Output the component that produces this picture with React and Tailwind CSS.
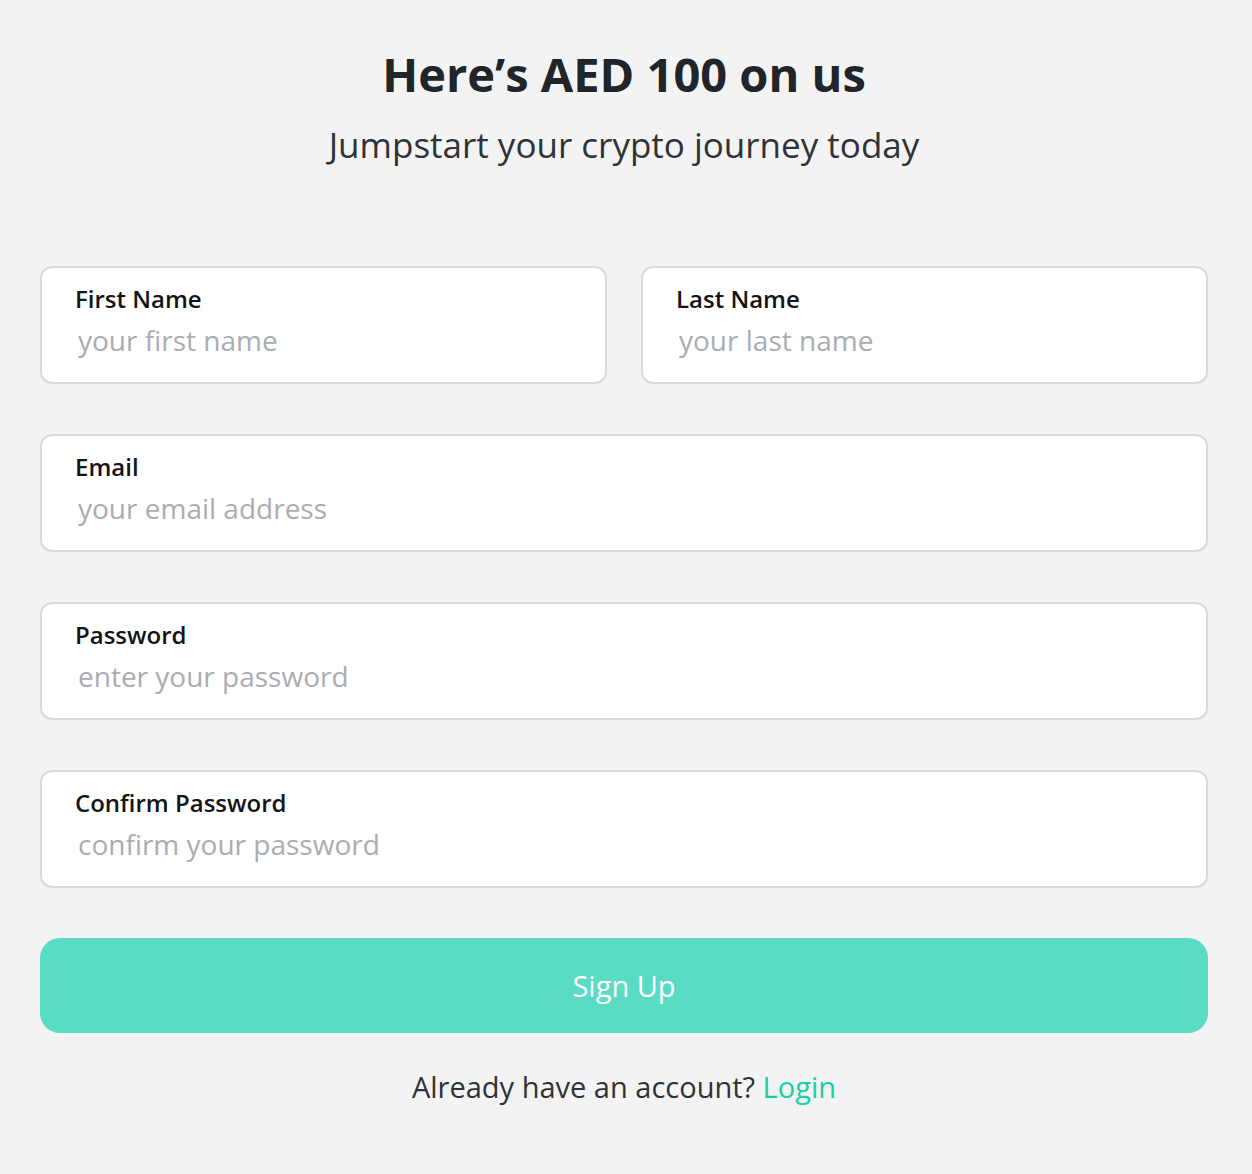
import React from "react";

function Field({ label, placeholder, type = "text" }) {
  return (
    <label className="flex h-[118px] flex-col rounded-[12px] border-2 border-[#d6d9dd] bg-white pl-[33px] pr-6 pt-[16px]">
      <span className="text-[24px] font-semibold leading-[30px] text-[#121416]">{label}</span>
      <input
        type={type}
        placeholder={placeholder}
        className="mt-[7px] w-full bg-transparent pl-[3px] text-[28px] leading-[38px] text-[#23272b] outline-none placeholder:text-[#a9adb2]"
      />
    </label>
  );
}

export default function App() {
  return (
    <div
      className="min-h-[1174px] bg-[#f3f3f3] pl-10 pr-[44px] pt-[40px]"
      style={{ fontFamily: '"Open Sans", "Noto Sans", sans-serif' }}
    >
      <div className="flex flex-col items-center">
        <h1 className="text-[47px] font-bold leading-[68px] text-[#212529]">Here’s AED 100 on us</h1>
        <p className="mt-[13px] text-[35px] leading-[48px] text-[#2f3338]">Jumpstart your crypto journey today</p>
      </div>
      <form className="mt-[97px] flex flex-col gap-[50px]">
        <div className="grid grid-cols-2 gap-[34px]">
          <Field label="First Name" placeholder="your first name" />
          <Field label="Last Name" placeholder="your last name" />
        </div>
        <Field label="Email" placeholder="your email address" type="email" />
        <Field label="Password" placeholder="enter your password" type="password" />
        <Field label="Confirm Password" placeholder="confirm your password" type="password" />
        <button
          type="button"
          className="h-[95px] w-full rounded-[20px] bg-[#5adcc4] text-[29px] text-white"
        >
          Sign Up
        </button>
      </form>
      <p className="mt-[34px] text-center text-[29px] leading-[40px] text-[#2f3338]">
        Already have an account? <a className="text-[#1bcfa6]">Login</a>
      </p>
    </div>
  );
}
